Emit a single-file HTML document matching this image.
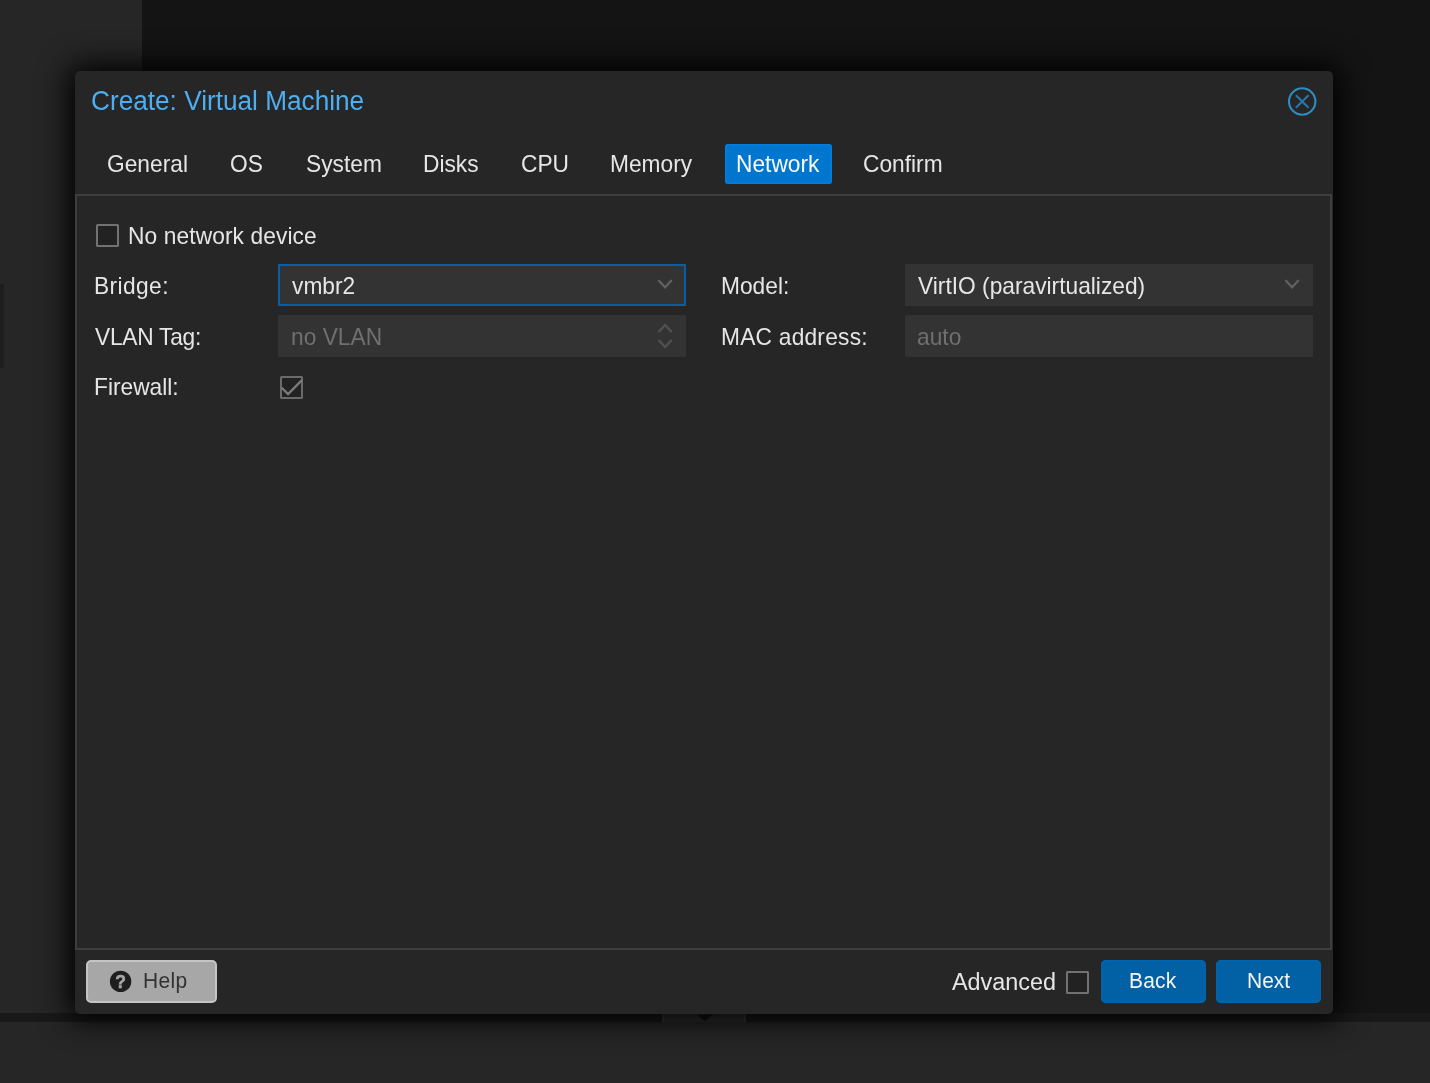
<!DOCTYPE html>
<html lang="en">
<head>
<meta charset="utf-8">
<title>Create: Virtual Machine</title>
<style>
  html, body { margin: 0; padding: 0; }
  body {
    width: 1430px; height: 1083px; position: relative; overflow: hidden;
    background: #141414;
    font-family: "Liberation Sans", sans-serif;
    color: #f0f0f0;
    -webkit-font-smoothing: antialiased;
  }
  .abs { position: absolute; }
  .t { position: absolute; white-space: nowrap; font-size: 22.75px; line-height: 28px; color: #e6e6e6;
       transform-origin: 0 21.88px; transform: scaleY(1.02); will-change: transform; }

  /* page background pieces */
  #leftstrip { left: 0; top: 0; width: 142px; height: 1013px; background: #262626; }
  #splitter  { left: 0; top: 1013px; width: 1430px; height: 9px; background: #191919; }
  #bottom    { left: 0; top: 1021.5px; width: 1430px; height: 62px; background: #262626; }
  #edgebit   { left: -4px; top: 284px; width: 7.5px; height: 84px; background: #1e1e1e; border-radius: 3px; }
  #handle    { left: 662px; top: 1014px; width: 84px; height: 8px; background: #303030; box-sizing: border-box; border-left: 2px solid #3c3c3c; border-right: 2px solid #3c3c3c; }

  /* dialog */
  #dialog {
    left: 75px; top: 71px; width: 1258px; height: 943px;
    background: #262626; border-radius: 5px;
    box-shadow: 0 0 30px 6px rgba(0,0,0,1);
  }
  #title { left: 91.3px; top: 85.1px; font-size: 26.2px; line-height: 32px; color: #4eaef2; transform-origin: 0 25.08px; }

  /* tabs */
  .tab { }
  .b21 { font-size: 21px; transform-origin: 0 21.27px; }
  #tab-active { left: 724.5px; top: 143.5px; width: 107.7px; height: 40.3px; background: #0076cf; border-radius: 3.5px; box-shadow: inset 0 0 0 1.5px #007fde; }

  /* body panel */
  #panel { left: 75px; top: 194px; width: 1257px; height: 756px; box-sizing: border-box; border: 2px solid #3e3e3e; }

  .field { background: #333333; height: 42px; width: 407.5px; }
  .ph { color: #707070; }

  .cb { box-sizing: border-box; width: 23.4px; height: 23.4px; border: 2px solid #727272; background: #222222; border-radius: 1.5px; }

  .btn { height: 42.8px; border-radius: 5px; top: 959.8px; }
  .blue { background: #0260a5; box-shadow: inset 0 0 0 1.5px #0065b0; }
</style>
</head>
<body>
  <div id="leftstrip" class="abs"></div>
  <div id="splitter" class="abs"></div>
  <div id="bottom" class="abs"></div>
  <div id="edgebit" class="abs"></div>
  <div id="handle" class="abs"></div>
  <svg class="abs" style="left:694px; top:1014px;" width="22" height="8" viewBox="0 0 22 8">
    <path d="M3.5 0.8 L18.5 0.8 L11 7.6 Z" fill="#141414"/>
  </svg>

  <div id="dialog" class="abs" role="dialog" aria-label="Create: Virtual Machine"></div>
  <div id="title" class="t">Create: Virtual Machine</div>

  <!-- close tool -->
  <svg class="abs" style="left:1285px; top:85px;" width="34" height="34" viewBox="0 0 34 34">
    <circle cx="17.2" cy="16.5" r="13.2" fill="none" stroke="#2d8cc2" stroke-width="2.1"/>
    <path d="M10.9 10.2 L23.5 22.8 M23.5 10.2 L10.9 22.8" stroke="#2a76a8" stroke-width="2.1" fill="none"/>
  </svg>

  <!-- tabs -->
  <div id="tab-active" class="abs" role="presentation"></div>
  <div role="tab" class="t tab" style="left:106.8px; top:150.3px;">General</div>
  <div role="tab" class="t tab" style="left:230.4px; top:150.3px;">OS</div>
  <div role="tab" class="t tab" style="left:305.8px; top:150.3px;">System</div>
  <div role="tab" class="t tab" style="left:422.8px; top:150.3px;">Disks</div>
  <div role="tab" class="t tab" style="left:521.2px; top:150.3px;">CPU</div>
  <div role="tab" class="t tab" style="left:610px; top:150.3px;">Memory</div>
  <div role="tab" class="t tab" style="left:736.4px; top:150.3px; color:#f8f8f8;">Network</div>
  <div role="tab" class="t tab" style="left:862.6px; top:150.3px;">Confirm</div>

  <div id="panel" class="abs" role="tabpanel"></div>

  <!-- row 0 -->
  <div class="abs cb" style="left:96px; top:223.7px;"></div>
  <div class="t" style="left:127.7px; top:221.9px; letter-spacing:0.1px;">No network device</div>

  <!-- row 1 -->
  <div class="t" style="left:93.5px; top:272.4px; letter-spacing:0.4px;">Bridge:</div>
  <div class="abs field" style="left:278px; width:408px; top:264.3px; box-sizing:border-box; border:2px solid #065fa6;"></div>
  <div class="t" style="left:292px; top:272.4px;">vmbr2</div>
  <svg class="abs" style="left:655px; top:277px;" width="20" height="16" viewBox="0 0 20 16">
    <path d="M4 3.8 L10.1 10.3 L16.2 3.8" fill="none" stroke="#616161" stroke-width="2.3" stroke-linecap="round"/>
  </svg>

  <div class="t" style="left:720.5px; top:272.4px;">Model:</div>
  <div class="abs field" style="left:905px; top:264.3px;"></div>
  <div class="t" style="left:918.3px; top:272.4px;">VirtIO (paravirtualized)</div>
  <svg class="abs" style="left:1281.5px; top:277px;" width="20" height="16" viewBox="0 0 20 16">
    <path d="M4 3.8 L10.1 10.3 L16.2 3.8" fill="none" stroke="#616161" stroke-width="2.3" stroke-linecap="round"/>
  </svg>

  <!-- row 2 -->
  <div class="t" style="left:95px; top:322.8px; letter-spacing:-0.25px;">VLAN Tag:</div>
  <div class="abs field" style="left:278px; width:408px; top:315px;"></div>
  <div class="t ph" style="left:290.6px; top:322.8px;">no VLAN</div>
  <svg class="abs" style="left:655px; top:320px;" width="20" height="32" viewBox="0 0 20 32">
    <path d="M4.1 11.4 L10.1 5 L16.1 11.4" fill="none" stroke="#505050" stroke-width="2.3" stroke-linecap="round"/>
    <path d="M4.1 20.6 L10.1 27 L16.1 20.6" fill="none" stroke="#505050" stroke-width="2.3" stroke-linecap="round"/>
  </svg>

  <div class="t" style="left:720.5px; top:322.8px; letter-spacing:0.22px;">MAC address:</div>
  <div class="abs field" style="left:905px; top:315px;"></div>
  <div class="t ph" style="left:917.3px; top:322.8px;">auto</div>

  <!-- row 3 -->
  <div class="t" style="left:93.5px; top:373.3px;">Firewall:</div>
  <div class="abs cb" style="left:279.8px; top:376px; border-color:#6b6b6b;"></div>
  <svg class="abs" style="left:279.8px; top:376px;" width="24" height="24" viewBox="0 0 24 24">
    <path d="M1.7 11.7 L8.1 18.1 L21.9 4.1" fill="none" stroke="#7b7b7b" stroke-width="2.3"/>
  </svg>

  <!-- bottom bar -->
  <div class="abs btn" style="left:85.9px; width:131.3px; background:#a7a7a7; box-sizing:border-box; border:2px solid #c4c4c4;"></div>
  <svg class="abs" style="left:108px; top:969px; will-change:transform;" width="26" height="26" viewBox="0 0 26 26">
    <circle cx="12.6" cy="12.4" r="10.7" fill="#1e1e1e"/>
    <text x="12.6" y="18.6" text-anchor="middle" font-family="Liberation Sans, sans-serif" font-weight="bold" font-size="17.5" fill="#a7a7a7" stroke="#a7a7a7" stroke-width="0.5">?</text>
  </svg>
  <div class="t b21" style="left:142.7px; top:967.1px; color:#333333; letter-spacing:0.3px;">Help</div>

  <div class="t" style="left:951.6px; top:968.1px; font-size:23.4px; transform-origin:0 22.11px;">Advanced</div>
  <div class="abs cb" style="left:1065.5px; top:970.6px;"></div>

  <div role="button" class="abs btn blue" style="left:1100.6px; width:105.4px;"></div>
  <div class="t b21" style="left:1129.4px; top:967.1px; color:#f4f4f4; letter-spacing:0.15px;">Back</div>
  <div role="button" class="abs btn blue" style="left:1216.2px; width:105.3px;"></div>
  <div class="t b21" style="left:1247px; top:967.1px; color:#f4f4f4;">Next</div>
</body>
</html>
